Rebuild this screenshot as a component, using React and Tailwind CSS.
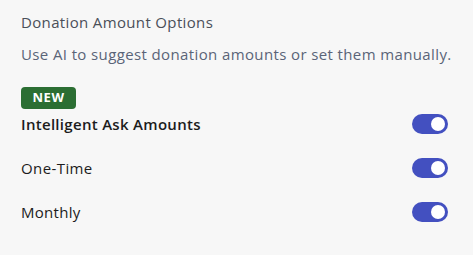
export default function App() {
  const Toggle = () => (
    <div className="w-[36px] h-[20px] rounded-full bg-[#4350c0] flex items-center justify-end pr-[3px]">
      <div className="w-[14px] h-[14px] rounded-full bg-white" />
    </div>
  );
  return (
    <div className="w-[473px] h-[255px] bg-[#f7f7f7] px-[21px] pt-[11px] flex flex-col items-start" style={{ fontFamily: "'Open Sans', Lato, sans-serif" }}>
      <div className="text-[15px] leading-[22px] tracking-[0.35px] text-[#4a4f59]">Donation Amount Options</div>
      <div className="mt-[10px] whitespace-nowrap text-[15px] leading-[22px] tracking-[0.38px] text-[#5a6478]">Use AI to suggest donation amounts or set them manually.</div>
      <div className="mt-[22px] inline-flex items-center justify-center w-[55px] h-[22px] rounded-[4px] bg-[#2b6e33] text-white text-[13px] tracking-[0.5px] font-bold">NEW</div>
      <div className="self-stretch flex items-center justify-between h-[30px] pr-[4px]">
        <span className="text-[15px] font-semibold tracking-[0.3px] text-[#1c1c1c]">Intelligent Ask Amounts</span>
        <Toggle />
      </div>
      <div className="self-stretch flex items-center justify-between h-[30px] mt-[14px] pr-[4px]">
        <span className="text-[15px] tracking-[0.4px] text-[#1c1c1c]">One-Time</span>
        <Toggle />
      </div>
      <div className="self-stretch flex items-center justify-between h-[30px] mt-[14px] pr-[4px]">
        <span className="text-[15px] tracking-[0.3px] text-[#1c1c1c]">Monthly</span>
        <Toggle />
      </div>
    </div>
  );
}
